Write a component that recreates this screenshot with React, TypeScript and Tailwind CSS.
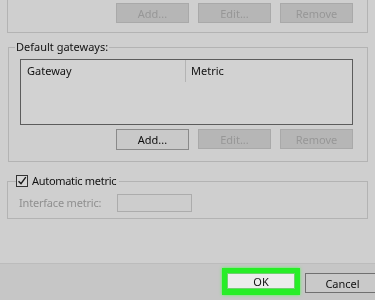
import React from "react";

const Btn = ({ label, disabled }: { label: string; disabled?: boolean }) => (
  <button
    className={
      disabled
        ? "w-[73px] h-[20px] bg-[#b6b6b6] border border-[#a9a9a9] text-[#979797] leading-none"
        : "w-[73px] h-[21px] bg-[#c9c9c9] border border-[#8a8a8a] text-[#0d0d0d] leading-none"
    }
  >
    {label}
  </button>
);

const App = () => {
  return (
    <div className="w-[375px] h-[300px] overflow-hidden bg-[#cfcfcf] flex flex-col text-[11px] text-[#111] font-['Noto_Sans',sans-serif] blur-[0.3px]">
      {/* IP addresses group (cut off at top) */}
      <div className="ml-[7px] mr-[7px] h-[33px] border-x border-b border-[#b3b3b3] flex justify-end items-start pt-[3px] pr-[14px] gap-[9px]">
        <Btn label="Add..." disabled />
        <Btn label="Edit..." disabled />
        <Btn label="Remove" disabled />
      </div>

      {/* Default gateways */}
      <fieldset className="ml-[8px] mr-[7px] mt-[6px] border border-[#b3b3b3] pb-[11px]">
        <legend className="ml-[6px] px-[1px] leading-[16px]">Default gateways:</legend>
        <div className="ml-[11px] mt-[4px] w-[333px] h-[66px] border border-[#5c5c5c] bg-[#d2d2d2]">
          <div className="flex h-[22px] items-center">
            <div className="w-[165px] h-full pl-[6px] flex items-center border-r border-[#b4b4b4]">Gateway</div>
            <div className="pl-[5px]">Metric</div>
          </div>
        </div>
        <div className="flex justify-end gap-[9px] mt-[4px] pr-[14px]">
          <Btn label="Add..." />
          <Btn label="Edit..." disabled />
          <Btn label="Remove" disabled />
        </div>
      </fieldset>

      {/* Automatic metric */}
      <fieldset className="ml-[7px] mr-[7px] mt-[11px] border border-[#b3b3b3] pb-[6px]">
        <legend className="ml-[8px] pr-[3px] flex items-center gap-[4px] leading-[16px]">
          <span className="w-[12px] h-[12px] border border-[#333] bg-[#d6d6d6] flex items-center justify-center">
            <svg width="10" height="10" viewBox="0 0 10 10">
              <path d="M1.5 5.2 L4 7.6 L8.8 1.2" fill="none" stroke="#1a1a1a" strokeWidth="1.4" />
            </svg>
          </span>
          <span className="tracking-[-0.3px]">Automatic metric</span>
        </legend>
        <div className="flex items-center mt-[5px] pl-[11px]">
          <span className="w-[98px] text-[#8f8f8f] tracking-[-0.2px]">Interface metric:</span>
          <div className="w-[75px] h-[18px] border border-[#acacac] bg-[#cdcdcd]" />
        </div>
      </fieldset>

      <div className="flex-1" />

      {/* Bottom bar */}
      <div className="h-[37px] bg-[#c6c6c6] border-t border-[#bcbcbc] flex items-start pt-[4px] pl-[222px] gap-[5px]">
        <div className="bg-[#27ee27] p-[5px] shadow-[0_0_3px_#4cff4c]">
          <button className="w-[68px] h-[16px] bg-[#ececec] border border-[#6fd06f] text-[#111] leading-none">OK</button>
        </div>
        <button className="mt-[5px] w-[75px] h-[20px] bg-[#c9c9c9] border border-[#707070] text-[#111] leading-none shrink-0">
          Cancel
        </button>
      </div>
    </div>
  );
};

export default App;
